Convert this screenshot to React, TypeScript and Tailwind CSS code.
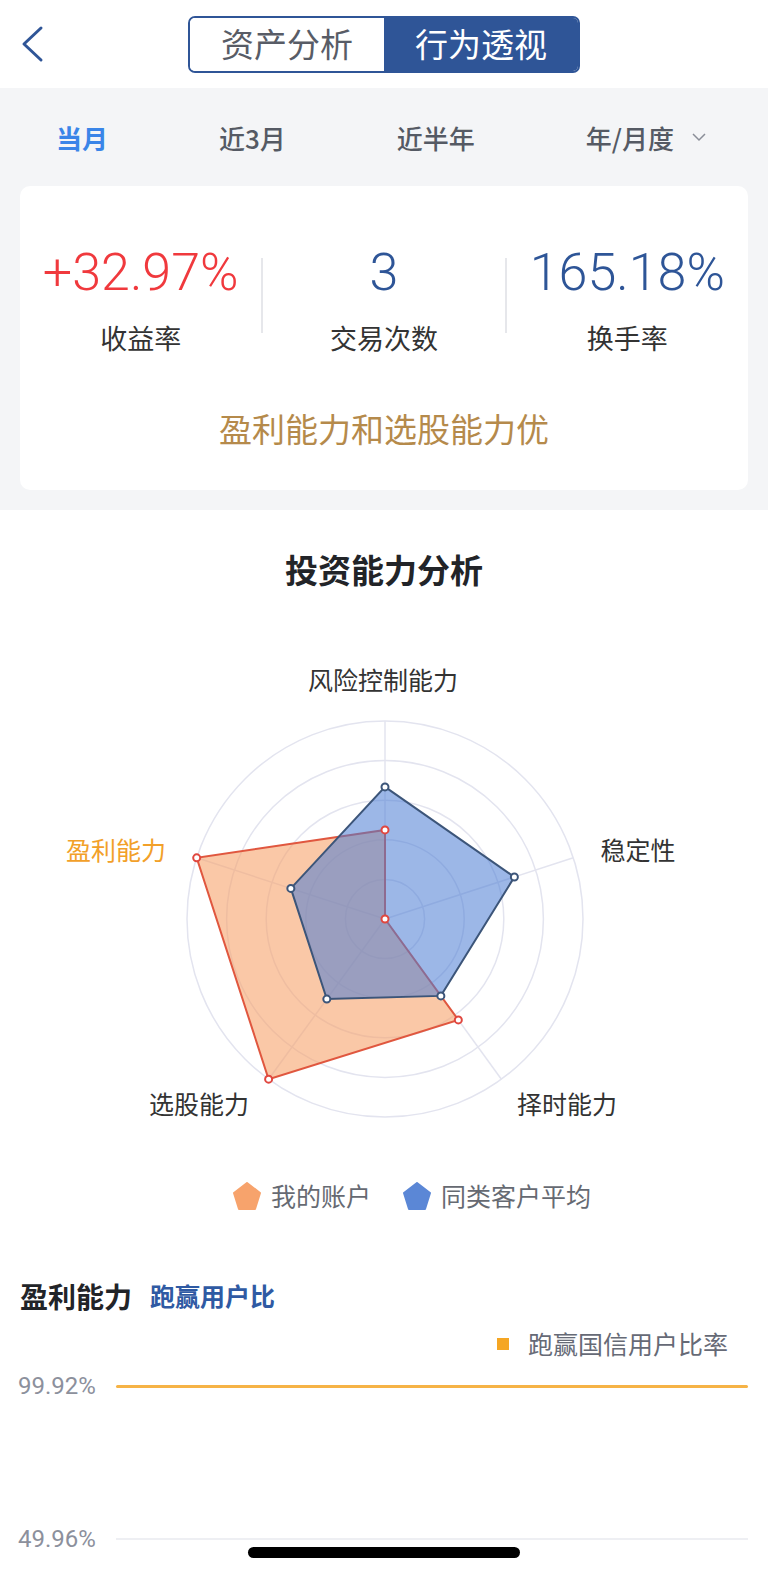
import React from 'react'

const CJK = "font-['Noto_Sans_CJK_SC','Noto_Sans',sans-serif]"
const NUM = "font-['Roboto','Liberation_Sans',sans-serif]"

const CX = 385
const CY = 330
const R = 198
const ANGLES = [-90, -18, 54, 126, 198].map((d) => (d * Math.PI) / 180)

const AVG = [0.667, 0.687, 0.48, 0.5, 0.5]
const MINE = [0.45, 0, 0.63, 1, 1]

function pt(i: number, v: number) {
  return [CX + R * v * Math.cos(ANGLES[i]), CY + R * v * Math.sin(ANGLES[i])]
}

function poly(vals: number[]) {
  return vals.map((v, i) => pt(i, v).join(',')).join(' ')
}

function Radar() {
  const labels = [
    { t: '风险控制能力', x: 383, y: 94, c: '#333333' },
    { t: '稳定性', x: 638, y: 264, c: '#333333' },
    { t: '择时能力', x: 567, y: 518, c: '#333333' },
    { t: '选股能力', x: 199, y: 518, c: '#333333' },
    { t: '盈利能力', x: 116, y: 264, c: '#f2a029' },
  ]
  return (
    <svg width={768} height={589} viewBox="0 0 768 589" className="block">
      {[1, 2, 3, 4, 5].map((k) => (
        <circle key={k} cx={CX} cy={CY} r={(R * k) / 5} fill="none" stroke="#e3e4ef" strokeWidth={1.5} />
      ))}
      {ANGLES.map((_, i) => {
        const [x, y] = pt(i, 1)
        return <line key={i} x1={CX} y1={CY} x2={x} y2={y} stroke="#e3e4ef" strokeWidth={1.5} />
      })}
      <polygon points={poly(MINE)} fill="#f7a36c" fillOpacity={0.6} stroke="#e0573f" strokeWidth={2} />
      <polygon points={poly(AVG)} fill="#4b7bd3" fillOpacity={0.55} stroke="#3c5579" strokeWidth={2} />
      {MINE.map((v, i) => {
        const [x, y] = pt(i, v)
        return <circle key={'m' + i} cx={x} cy={y} r={3.5} fill="#fff" stroke="#e0473f" strokeWidth={2} />
      })}
      {AVG.map((v, i) => {
        const [x, y] = pt(i, v)
        return <circle key={'a' + i} cx={x} cy={y} r={3.5} fill="#fff" stroke="#3c5579" strokeWidth={2} />
      })}
      {labels.map((l) => (
        <text
          key={l.t}
          x={l.x}
          y={l.y}
          textAnchor="middle"
          dominantBaseline="middle"
          fontSize={25}
          fill={l.c}
          fontFamily="'Noto Sans CJK SC', sans-serif"
        >
          {l.t}
        </text>
      ))}
    </svg>
  )
}

function Pentagon({ color }: { color: string }) {
  return (
    <svg width={28} height={28} viewBox="0 0 28 28">
      <polygon points="14,1 27,11 22,27 6,27 1,11" fill={color} strokeLinejoin="round" stroke={color} strokeWidth={2} />
    </svg>
  )
}

function Stat({ value, label, color }: { value: string; label: string; color: string }) {
  return (
    <div className="flex-1 flex flex-col items-center">
      <div className={`${NUM} font-light text-[52px] leading-[56px] ${color}`}>{value}</div>
      <div className="mt-[19px] text-[27px] leading-[36px] text-[#333333]">{label}</div>
    </div>
  )
}

export default function App() {
  const tabs = ['当月', '近3月', '近半年']
  return (
    <div className={`${CJK} relative w-[768px] min-h-[1575px] bg-white overflow-hidden`}>
      {/* header */}
      <div className="h-[88px] flex items-center bg-white">
        <div className="w-[188px] pl-[20px]">
          <svg width={26} height={40} viewBox="0 0 26 40">
            <polyline points="21,4 4,20 21,36" fill="none" stroke="#2f5597" strokeWidth={3} strokeLinecap="round" strokeLinejoin="round" />
          </svg>
        </div>
        <div className="flex h-[57px] w-[392px] rounded-[7px] border-2 border-[#2f5597] overflow-hidden">
          <div className="flex-1 flex items-center justify-center text-[33px] text-[#585c66] bg-white">资产分析</div>
          <div className="flex-1 flex items-center justify-center text-[33px] text-white bg-[#2f5597]">行为透视</div>
        </div>
      </div>

      {/* filters + summary card */}
      <div className="bg-[#f4f5f7] pb-[20px]">
        <div className="h-[98px] flex items-center justify-between pl-[56px] pr-[62px] text-[26px]">
          {tabs.map((t, i) => (
            <span key={t} className={i === 0 ? 'font-semibold text-[#3a85e8]' : 'font-medium text-[#555a64]'}>
              {t}
            </span>
          ))}
          <span className="flex items-center gap-[18px] font-medium text-[#555a64]">
            年/月度
            <svg width={14} height={10} viewBox="0 0 14 10">
              <polyline points="1,2 7,8 13,2" fill="none" stroke="#8a8e98" strokeWidth={1.5} />
            </svg>
          </span>
        </div>
        <div className="mx-[20px] h-[304px] bg-white rounded-[10px] pt-[59px]">
          <div className="flex">
            <Stat value="+32.97%" label="收益率" color="text-[#f0393d]" />
            <div className="w-[2px] h-[75px] mt-[13px] bg-[#e6e7eb]" />
            <Stat value="3" label="交易次数" color="text-[#2e5597]" />
            <div className="w-[2px] h-[75px] mt-[13px] bg-[#e6e7eb]" />
            <Stat value="165.18%" label="换手率" color="text-[#2e5597]" />
          </div>
          <div className="mt-[52px] text-center text-[33px] leading-[40px] text-[#b58a4b]">盈利能力和选股能力优</div>
        </div>
      </div>

      {/* radar */}
      <div className="pt-[39px]">
        <div className="text-center text-[33px] leading-[40px] font-bold text-[#222428]">投资能力分析</div>
        <Radar />
        <div className="h-[36px] flex items-center justify-center pl-[56px] gap-[10px] text-[25px] text-[#666a72]">
          <Pentagon color="#f7a36c" />
          <span>我的账户</span>
          <span className="w-[12px]" />
          <Pentagon color="#5b87d6" />
          <span>同类客户平均</span>
        </div>
      </div>

      {/* profit chart */}
      <div className="mt-[62px] pl-[20px] flex items-center gap-[18px] h-[40px]">
        <span className="text-[28px] font-bold text-[#222428]">盈利能力</span>
        <span className="text-[25px] font-bold text-[#2f5aa3]">跑赢用户比</span>
      </div>
      <div className="mt-[11px] h-[34px] flex items-center justify-end pr-[40px] gap-[19px] text-[25px] text-[#666a76]">
        <span className="w-[12px] h-[12px] bg-[#f5a623]" />
        <span>跑赢国信用户比率</span>
      </div>
      <div className="mt-[10px] flex items-center h-[30px]">
        <span className={`${NUM} w-[116px] pl-[18px] text-[24px] text-[#8c909c]`}>99.92%</span>
        <div className="flex-1 mr-[20px] h-[3px] bg-[#f6b346] rounded-full" />
      </div>
      <div className="mt-[123px] flex items-center h-[30px]">
        <span className={`${NUM} w-[116px] pl-[18px] text-[24px] text-[#8c909c]`}>49.96%</span>
        <div className="flex-1 mr-[20px] h-[2px] bg-[#eeeff3]" />
      </div>

      {/* home indicator */}
      <div className="absolute left-[248px] bottom-[17px] w-[272px] h-[11px] rounded-full bg-black" />
    </div>
  )
}
